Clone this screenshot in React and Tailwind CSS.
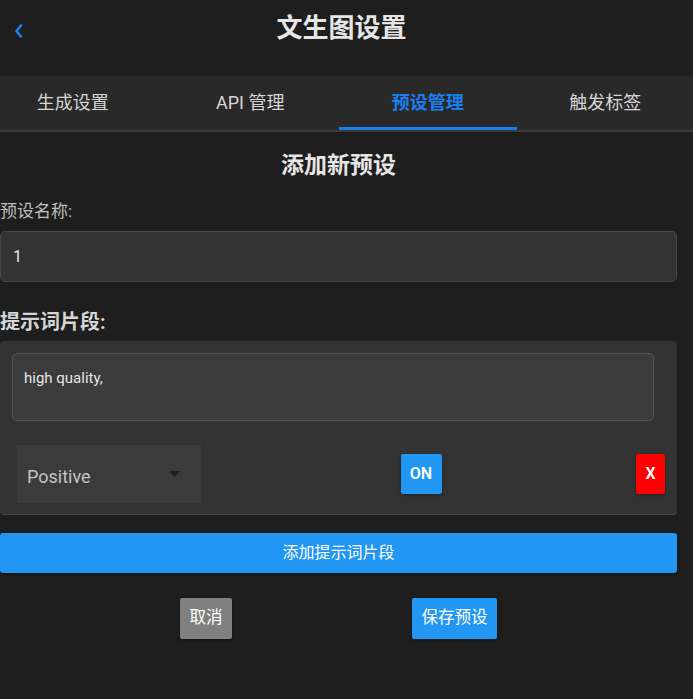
import React, { useState } from "react";

const tabs = ["生成设置", "API 管理", "预设管理", "触发标签"];

function BackChevron() {
  return (
    <svg width="9" height="14" viewBox="0 0 9 14" fill="none">
      <path d="M7 1.5 L2.5 7 L7 12.5" stroke="#1a7ff0" strokeWidth="2.6" strokeLinecap="round" strokeLinejoin="round" />
    </svg>
  );
}

export default function App() {
  const [active] = useState(2);
  const [name, setName] = useState("1");
  const [text, setText] = useState("high quality,");

  return (
    <div className="min-h-[699px] w-full overflow-hidden bg-[#1e1e1e] font-['Roboto','Noto_Sans_CJK_SC',sans-serif] text-[#e6e6e6]">
      {/* header */}
      <div className="relative flex h-[56px] items-center justify-center pr-[10px]">
        <button className="absolute left-[12px] top-[22px] p-[2px]">
          <BackChevron />
        </button>
        <h1 className="text-[26px] font-bold leading-none text-[#e6e6e6]">文生图设置</h1>
      </div>

      {/* tab bar */}
      <div className="mt-[20px] overflow-hidden border-b-2 border-[#3b3b3b] bg-[#292929]">
        <div className="ml-[-16px] flex">
          {tabs.map((t, i) => (
            <div
              key={t}
              className={
                i === active
                  ? "flex h-[53.5px] w-[177.5px] shrink-0 items-center justify-center border-b-[3px] border-[#1a7ff0] pt-[3px] text-[18px] font-bold text-[#1a7ff0]"
                  : "flex h-[53.5px] w-[177.5px] shrink-0 items-center justify-center border-b-[3px] border-transparent pt-[3px] text-[18px] text-[#d6d6d6]"
              }
            >
              {t}
            </div>
          ))}
        </div>
      </div>

      {/* form */}
      <div className="w-[677px]">
        <h2 className="mt-[19px] text-center text-[23px] font-bold leading-[30px] text-[#e6e6e6]">添加新预设</h2>

        <div className="mt-[18px] text-[17px] leading-[24px] text-[#bdbdbd]">预设名称:</div>
        <input
          value={name}
          onChange={(e) => setName(e.target.value)}
          className="mt-[8px] h-[51px] w-full rounded-[5px] border border-[#474747] bg-[#333333] px-[12px] text-[16px] text-[#e6e6e6] outline-none"
        />

        <div className="mt-[26px] text-[20px] font-bold leading-[28px] text-[#d6d6d6]">提示词片段:</div>

        <div className="mt-[5px] rounded-[4px] border-b border-[#474747] bg-[#333333] px-[12px] pt-[12px] pb-[6px]">
          <textarea
            value={text}
            onChange={(e) => setText(e.target.value)}
            className="block h-[68px] w-[642px] resize-none rounded-[5px] border border-[#555555] bg-[#3c3c3c] px-[11px] pt-[14px] pb-[10px] text-[15px] leading-[20px] text-[#e6e6e6] outline-none"
          />
          <div className="mt-[19px] flex items-center justify-between">
            <div className="m-[5px] flex h-[58px] w-[184px] items-center justify-between bg-[#3b3b3b] pl-[10px] pr-[21px]">
              <span className="pt-[6px] text-[18px] text-[#c4c4c4]">Positive</span>
              <svg width="11" height="6" viewBox="0 0 11 6">
                <path d="M0 0 L11 0 L5.5 6 Z" fill="#1f1f1f" />
              </svg>
            </div>
            <button className="h-[40px] w-[41px] rounded-[2px] bg-[#2196f3] text-[16px] font-semibold text-white shadow-[0_1px_3px_rgba(0,0,0,0.4)]">
              ON
            </button>
            <button className="h-[40px] w-[29px] rounded-[2px] bg-[#ff0000] text-[16px] font-semibold text-white shadow-[0_1px_3px_rgba(0,0,0,0.4)]">
              X
            </button>
          </div>
        </div>

        <button className="mt-[18px] flex h-[40px] w-full items-center justify-center rounded-[3px] bg-[#2196f3] text-[16px] text-white shadow-[0_1px_3px_rgba(0,0,0,0.4)]">
          添加提示词片段
        </button>

        <div className="mt-[25px] flex justify-evenly">
          <button className="h-[41px] w-[52px] rounded-[2px] bg-[#808080] text-[16.5px] text-white shadow-[0_1px_3px_rgba(0,0,0,0.4)]">
            取消
          </button>
          <button className="h-[41px] w-[85px] rounded-[2px] bg-[#2196f3] text-[16.5px] text-white shadow-[0_1px_3px_rgba(0,0,0,0.4)]">
            保存预设
          </button>
        </div>
      </div>
    </div>
  );
}
